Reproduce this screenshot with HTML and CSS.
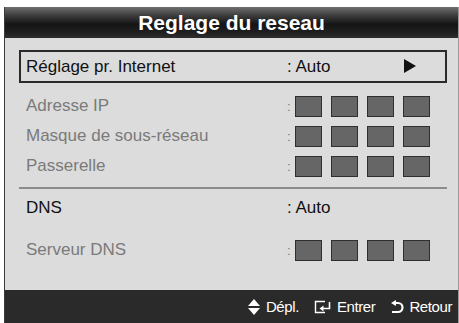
FILE: index.html
```html
<!DOCTYPE html>
<html lang="fr">
<head>
    <meta charset="UTF-8">
    <title>Reglage du reseau</title>
    <link rel="stylesheet" href="styles.css">
</head>
<body>
    <div class="panel">
        <div class="title">Reglage du reseau</div>

        <div class="content">
            <div class="row selected">
                <span class="label">Réglage pr. Internet</span>
                <span class="value">: Auto</span>
                <svg class="arrow" width="14" height="14" viewBox="0 0 14 14"><path d="M1 0 L13 7 L1 14 Z" fill="#111"/></svg>
            </div>

            <div class="row off">
                <span class="label">Adresse IP</span>
                <span class="colon">:</span>
                <span class="box"></span><span class="box"></span><span class="box"></span><span class="box"></span>
            </div>
            <div class="row off">
                <span class="label">Masque de sous-réseau</span>
                <span class="colon">:</span>
                <span class="box"></span><span class="box"></span><span class="box"></span><span class="box"></span>
            </div>
            <div class="row off">
                <span class="label">Passerelle</span>
                <span class="colon">:</span>
                <span class="box"></span><span class="box"></span><span class="box"></span><span class="box"></span>
            </div>

            <div class="divider"></div>

            <div class="row dns">
                <span class="label">DNS</span>
                <span class="value">: Auto</span>
            </div>
            <div class="row off server">
                <span class="label">Serveur DNS</span>
                <span class="colon">:</span>
                <span class="box"></span><span class="box"></span><span class="box"></span><span class="box"></span>
            </div>
        </div>

        <div class="footer">
            <span class="hint">
                <svg width="14" height="18" viewBox="0 0 14 18"><path d="M7 1 L13 8 L1 8 Z M1 10 L13 10 L7 17 Z" fill="#fff"/></svg>
                Dépl.
            </span>
            <span class="hint">
                <svg width="18" height="14" viewBox="0 0 18 14"><path d="M11 1.5 H1.5 V12.5 H11" fill="none" stroke="#fff" stroke-width="1.4"/><path d="M15.5 2 V8.5 H8" fill="none" stroke="#fff" stroke-width="1.6"/><path d="M5.5 8.5 L9.5 5.5 L9.5 11.5 Z" fill="#fff"/></svg>
                Entrer
            </span>
            <span class="hint">
                <svg width="14" height="14" viewBox="0 0 14 14"><path d="M5 3 H8 A4.5 4.5 0 0 1 8 12 H2" fill="none" stroke="#fff" stroke-width="2.2"/><path d="M1 3 L6 0 L6 6 Z" fill="#fff"/></svg>
                Retour
            </span>
        </div>
    </div>
</body>
</html>
```

FILE: styles.css
```css
* {margin: 0; padding: 0; box-sizing: border-box;}

body
{
    background: #fff;
    font-family: "Liberation Sans", Arial, sans-serif;
}

.panel
{
    margin: 7px 0 0 4px;
    width: 455px;
    height: 316px;
    display: flex;
    flex-direction: column;
    background: #dcdcdc;
    border-left: 1px solid #3c3c3c;
    border-right: 1px solid #9a9a9a;
}

.title
{
    height: 31px;
    line-height: 31px;
    text-align: center;
    color: #fff;
    font-size: 21px;
    font-weight: bold;
    background: linear-gradient(#707070 0%, #3c3c3c 28%, #151515 55%, #1e1e1e 80%, #2e2e2e 100%);
}

.content
{
    flex: 1;
    padding: 12px 11px 0 14px;
}

.row
{
    height: 30px;
    display: flex;
    align-items: center;
    padding-left: 6px;
    border: 1px solid transparent;
    font-size: 17px;
    color: #111;
}

.row.selected
{
    height: 33px;
    border: 2px solid #2a2a2a;
    padding-left: 5px;
    margin-bottom: 8px;
}

.label
{
    width: 261px;
}

.value
{
    width: 116px;
}

.arrow
{
    margin-top: -1px;
}

.off
{
    color: #7a7a7a;
}

.colon
{
    width: 8px;
    font-size: 13px;
}

.box
{
    width: 27px;
    height: 21px;
    margin-right: 9px;
    background: #666;
    border: 1px solid #2f2f2f;
}

.divider
{
    height: 2px;
    margin: 6px 0 4px 0;
    background: #8c8c8c;
}

.server
{
    margin-top: 12px;
}

.footer
{
    height: 33px;
    display: flex;
    justify-content: flex-end;
    align-items: center;
    gap: 15px;
    padding-right: 6px;
    background: #2a2a2a;
    color: #fff;
    font-size: 15px;
    letter-spacing: -0.4px;
}

.hint
{
    display: flex;
    align-items: center;
    gap: 5px;
}
```
